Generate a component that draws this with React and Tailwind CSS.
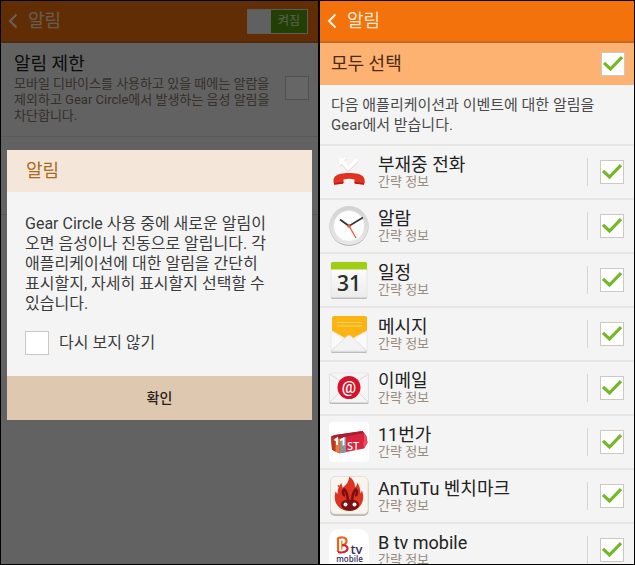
import React, { useState } from "react";

function MissedCallIcon() {
  return (
    <svg viewBox="0 0 40 40" className="size-10" aria-hidden="true">
      <path d="M10.500 15.500V7h7l-2.300 2.400 3.800 5.600 8-8 2.500 2.500L19 20.500l-6.300-7.700z" fill="#d9d9d9" />
      <path d="M10.200 14.500V6h7.300l-2.300 2.400 3.800 5.800 8-8 2.500 2.300L19 19.300l-6.300-7.500z" fill="#fff" />
      <path d="M4.600 30c-.8-4.500 2.200-7 7-8.200 5-1.100 12-1.100 17 0 4.800 1.200 7.700 3.700 7 8.200l-.7 2.500-8.400-1c-.7-.1-1-.6-1-1.300v-2.600c-3.500-1-7.500-1-11 0v2.600c0 .7-.3 1.200-1 1.300l-8.200 1z" fill="#e03322" />
      <path d="M4.600 29.500l.7 3.200 8.200-1c.7-.1 1-.6 1-1.300v-1l-1 .6-8 1zM35.600 29.500l-.7 3.200-8.400-1c-.7-.1-1-.6-1-1.300v-1l1 .6 8 1z" fill="#b81f14" />
    </svg>
  );
}

function ClockIcon() {
  return (
    <svg viewBox="0 0 40 40" className="size-10" aria-hidden="true">
      <defs>
        <linearGradient id="clock-rim" x1="0" y1="0" x2="0" y2="1">
          <stop offset="0" stopColor="#d2d2d2" />
          <stop offset="1" stopColor="#e8e8e8" />
        </linearGradient>
      </defs>
      <circle cx="20" cy="20.400" r="19.500" fill="#b3b3b3" />
      <circle cx="20" cy="19.600" r="19.500" fill="url(#clock-rim)" />
      <circle cx="20" cy="20" r="15.500" fill="#fdfdfd" stroke="#dedede" strokeWidth="0.600" />
      <path d="M11 13.500L20 20" stroke="#343434" strokeWidth="1.900" />
      <path d="M20 20L34 11.500" stroke="#343434" strokeWidth="1.500" />
      <path d="M19.500 19L27 32" stroke="#e8573c" strokeWidth="1.300" />
      <circle cx="20" cy="20" r="1.800" fill="#e8573c" />
    </svg>
  );
}

function CalendarIcon() {
  return (
    <svg viewBox="0 0 40 40" className="size-10" aria-hidden="true">
      <defs>
        <linearGradient id="cal-page" x1="0" y1="0" x2="0" y2="1">
          <stop offset="0" stopColor="#fff" />
          <stop offset="1" stopColor="#ececec" />
        </linearGradient>
      </defs>
      <rect x="2" y="2.500" width="36" height="36.500" rx="1.500" fill="#bcbcbc" />
      <rect x="2" y="2" width="36" height="35.500" rx="1.500" fill="url(#cal-page)" stroke="#dadada" strokeWidth="0.500" />
      <path d="M2 9.500V3.500a1.500 1.500 0 0 1 1.500-1.500h33a1.500 1.500 0 0 1 1.500 1.500v6z" fill="#a3cc14" />
      <text x="20" y="31" textAnchor="middle" fontFamily="Open Sans, sans-serif" fontWeight="600" fontSize="21" fill="#283127">31</text>
    </svg>
  );
}

function MessageIcon() {
  return (
    <svg viewBox="0 0 40 40" className="size-10" aria-hidden="true">
      <rect x="2" y="18" width="36" height="21" rx="1.500" fill="#bdbdbd" />
      <path d="M2 18h36v18a1.500 1.500 0 0 1-1.500 1.500h-33A1.500 1.500 0 0 1 2 36z" fill="#f7f7f7" />
      <path d="M3 4a2 2 0 0 1 2-2h31a2 2 0 0 1 2 2v12.500L24 24h-8L3 16.500z" fill="#fbb411" />
      <path d="M8 8.500h25M8 12h25" stroke="#fdd467" strokeWidth="1" />
      <path d="M2 17l14 8-14 12zM38 17l-14 8 14 12z" fill="#fafafa" stroke="#d8d8d8" strokeWidth="0.500" />
      <path d="M2 37.200L17.500 22.500q2.500-2.500 5 0L38 37.200z" fill="#f3f3f3" stroke="#d5d5d5" strokeWidth="0.600" />
    </svg>
  );
}

function EmailIcon() {
  return (
    <svg viewBox="0 0 40 40" className="size-10" aria-hidden="true">
      <rect x="0.500" y="6" width="39" height="30" rx="1.500" fill="#b9b9b9" />
      <rect x="0.500" y="5" width="39" height="29.500" rx="1.500" fill="#f5f5f5" stroke="#dcdcdc" strokeWidth="0.500" />
      <path d="M1 6l19 13.500L39 6M1 34l14-14M39 34L25 20" fill="none" stroke="#cbcbcb" strokeWidth="0.700" />
      <circle cx="20" cy="19.500" r="11.500" fill="#d5132b" />
      <text x="20" y="24.500" textAnchor="middle" fontFamily="Roboto, sans-serif" fontWeight="500" fontSize="16" fill="#fff">@</text>
    </svg>
  );
}

function ElevenStreetIcon() {
  return (
    <svg viewBox="0 0 40 40" className="size-10" aria-hidden="true">
      <rect width="40" height="40" rx="3.500" fill="#fff" />
      <path d="M2 14.500l4-1.500L33.500 9l3.500 4.500 1.500 7-3.500 6-18 3.500-7.500 1L3 27.500z" fill="#d92440" />
      <path d="M2 14.500l4-1.500L33.500 9l1.500 2-17.500 3.500-7.500 2.500z" fill="#aa1a30" />
      <path d="M2 14.500L6.500 16v14L3 27.500z" fill="#b8371f" />
      <path d="M6.500 16l4 .8V31.500l-4-1.700z" fill="#ee7d2c" />
      <path d="M10.500 16.800l6.500-1.800v15.200l-6.500 1.300z" fill="#8f9499" />
      <path d="M5.500 18.500l2.500-2v6.500M11 18.500l3.500-2v7" fill="none" stroke="#fff" strokeWidth="1.900" />
      <path d="M35 11l2.500 3 1 6.500-3.200 5.500-1.300-3.500 1-3.500z" fill="#f0485c" />
      <text x="24" y="27.500" textAnchor="middle" fontFamily="Noto Sans, sans-serif" fontWeight="500" fontSize="11" fill="#fff">ST</text>
    </svg>
  );
}

function AntutuIcon() {
  return (
    <svg viewBox="0 0 40 40" className="size-10" aria-hidden="true">
      <rect x="1" y="1.500" width="38.500" height="38.500" rx="5" fill="#bcb8b2" />
      <rect x="1.500" y="0.500" width="37.500" height="37.500" rx="4.500" fill="#f8f5ef" stroke="#dcd8d1" strokeWidth="0.700" />
      <path d="M20 .5c4.500 3 6 6.500 6 10.500 1.500-1 2.300-2.500 2.300-4.500 3.200 5 2.700 8 3.200 10.500.8-.8 1.300-1.800 1.300-2.800 3 7.300 1 13.800-3.600 17.800-5.200 4-13.200 4-18.200 0C6.300 28 4.500 23.500 6.500 15.500c.8 1.300 1.500 2 2.300 2.300-1-5 2.200-7.500 3.200-10.800 1 1.800 1.500 3.300 1.500 4.700C17.500 8.500 20.300 5 20 .5z" fill="#dc3322" />
      <path d="M8.500 9.500q2-1.200 2.500 1.200-1.500 2-2.500-1.200z" fill="#e3402b" />
      <path d="M19 26c-.5-4 .2-9-3.800-12.500-2 2-1.500 5.500.8 6" fill="none" stroke="#7a1011" strokeWidth="2.600" />
      <path d="M23 26c.5-4-.2-9 3.800-12.500 2 2 1.500 5.500-.8 6" fill="none" stroke="#7a1011" strokeWidth="2.600" />
      <path d="M12 28c.5-3.200 4-4.300 9-4.300s8.500 1.100 9 4.300c.5 4-4 6.800-9 6.800s-9.500-2.800-9-6.800z" fill="#7a1011" />
      <circle cx="16.500" cy="28.500" r="2" fill="#fff" />
      <circle cx="25.500" cy="28.500" r="2" fill="#fff" />
    </svg>
  );
}

function BtvIcon() {
  return (
    <svg viewBox="0 0 40 40" className="size-10 overflow-visible" aria-hidden="true">
      <rect y="-1" width="40" height="41" rx="10" fill="#fff" />
      <path d="M9 7.500v14.500M9 8c5.500-1.500 8.500 0 8.500 3s-2 3.800-4.500 4.300" fill="none" stroke="#e9641f" strokeWidth="2.200" />
      <path d="M12.800 10.500v9" stroke="#f39a2c" strokeWidth="1.600" />
      <path d="M13 15.300c4-.3 5.700 1.200 5.500 3.400-.4 3.500-5 4.300-9.500 3.500" fill="none" stroke="#d81f35" strokeWidth="2.200" />
      <text x="27.500" y="23.500" textAnchor="middle" fontFamily="Open Sans, sans-serif" fontWeight="600" fontSize="13" fill="#33305f">tv</text>
      <text x="20.500" y="32" textAnchor="middle" fontFamily="Open Sans, sans-serif" fontWeight="600" fontSize="8" fill="#33305f">mobile</text>
    </svg>
  );
}

const apps = [
  { id: "missed", name: "부재중 전화", Icon: MissedCallIcon },
  { id: "alarm", name: "알람", Icon: ClockIcon },
  { id: "calendar", name: "일정", Icon: CalendarIcon },
  { id: "message", name: "메시지", Icon: MessageIcon },
  { id: "email", name: "이메일", Icon: EmailIcon },
  { id: "eleven", name: "11번가", Icon: ElevenStreetIcon },
  { id: "antutu", name: "AnTuTu 벤치마크", Icon: AntutuIcon },
  { id: "btv", name: "B tv mobile", Icon: BtvIcon },
];

function CheckBox({ id, label, defaultChecked }) {
  return (
    <span className="grid size-6 shrink-0">
      <input
        id={id}
        type="checkbox"
        aria-label={label}
        defaultChecked={defaultChecked}
        className="peer col-start-1 row-start-1 size-6 appearance-none border border-[#cfc8c2] bg-white"
      />
      <svg
        viewBox="0 0 24 24"
        className="pointer-events-none invisible col-start-1 row-start-1 size-6 peer-checked:visible"
        aria-hidden="true"
      >
        <path d="M3 10.800l6.500 6.200L21 5.200" fill="none" stroke="#74b82a" strokeWidth="3.200" />
      </svg>
    </span>
  );
}

function Header({ children }) {
  return (
    <header className="flex h-[42px] shrink-0 items-center border-b-2 border-[#c56a22] bg-[#f3720c] pr-[10px] pl-[6px]">
      <button type="button" aria-label="뒤로" className="text-[#fff0e2]">
        <svg viewBox="0 0 12 16" className="h-4 w-3" aria-hidden="true">
          <path d="M9.500 1.500L3 8l6.500 6.500" fill="none" stroke="currentColor" strokeWidth="2" />
        </svg>
      </button>
      <h1 className="ml-[9px] flex-1 text-lg text-[#ffe6d0]">알림</h1>
      {children}
    </header>
  );
}

function NoticeScreen() {
  const [on, setOn] = useState(true);
  return (
    <section className="relative flex flex-[317_1_0%] flex-col overflow-hidden bg-[#f4f4f4]">
      <Header>
        <button
          type="button"
          role="switch"
          aria-checked={on}
          onClick={() => setOn(!on)}
          className="flex h-[25px] w-[61px] border border-[#e5e5e5] bg-[#59a00a] text-xs text-[#e0efcf]"
        >
          <span className="h-full w-[23px] bg-[#efefef]" />
          <span className="flex-1 self-center">켜짐</span>
        </button>
      </Header>
      <div className="flex items-center border-b border-[#dcdcdc] pt-[9px] pr-[9px] pb-3 pl-[13px]">
        <div className="flex-1">
          <h2 className="text-lg leading-6 text-[#222]">
            <label htmlFor="limit">알림 제한</label>
          </h2>
          <p className="text-[13px] leading-4 text-[#85786a]">
            모바일 디바이스를 사용하고 있을 때에는 알람을
            <br />
            제외하고 Gear Circle에서 발생하는 음성 알림을
            <br />
            차단합니다.
          </p>
        </div>
        <CheckBox id="limit" />
      </div>
      <div className="h-[78px] border-b border-[#dcdcdc]" />

      <div className="absolute inset-0 flex items-center bg-black/60 px-[6px] pt-1">
        <div role="dialog" aria-labelledby="dialog-title" className="w-full bg-[#f4f4f4]">
          <h2
            id="dialog-title"
            className="flex h-[42px] items-center bg-[#f4e7da] px-[19px] text-lg text-[#a66c1e]"
          >
            알림
          </h2>
          <div className="px-[18px] pt-[22px] pb-[21px] text-base leading-5 text-[#3c3c3c]">
            <p>
              Gear Circle 사용 중에 새로운 알림이
              <br />
              오면 음성이나 진동으로 알립니다. 각
              <br />
              애플리케이션에 대한 알림을 간단히
              <br />
              표시할지, 자세히 표시할지 선택할 수
              <br />
              있습니다.
            </p>
            <div className="mt-[17px] flex items-center gap-[10px]">
              <CheckBox id="hide-again" />
              <label htmlFor="hide-again">다시 보지 않기</label>
            </div>
          </div>
          <button type="button" className="h-11 w-full bg-[#dec8af] text-sm font-medium text-[#2c2118]">
            확인
          </button>
        </div>
      </div>
    </section>
  );
}

function AppRow({ app }) {
  const { id, name, Icon } = app;
  return (
    <li className="flex h-[54px] shrink-0 items-center border-t-2 border-[#e8e6e5] pr-[10px] pl-[9px]">
      <Icon />
      <label htmlFor={id} className="ml-[9px] flex-1">
        <span className="block text-lg leading-5 text-[#222]">{name}</span>
        <span className="block text-[13px] leading-[14px] text-[#998b7e]">간략 정보</span>
      </label>
      <span className="mr-3 h-7 w-px bg-[#d6d6d6]" />
      <CheckBox id={id} defaultChecked />
    </li>
  );
}

function ListScreen() {
  return (
    <section className="flex flex-[314_1_0%] flex-col overflow-hidden bg-[#f4f4f4]">
      <Header />
      <div className="flex h-[42px] shrink-0 items-center justify-between bg-[#fdb271] pr-[9px] pl-[11px]">
        <label htmlFor="all" className="text-lg text-[#4a2b12]">
          모두 선택
        </label>
        <CheckBox id="all" defaultChecked />
      </div>
      <p className="h-[59px] shrink-0 px-[11px] pt-[10px] text-[15px] leading-5 text-[#4a4a4a]">
        다음 애플리케이션과 이벤트에 대한 알림을
        <br />
        Gear에서 받습니다.
      </p>
      <ul>
        {apps.map((app) => (
          <AppRow key={app.id} app={app} />
        ))}
      </ul>
    </section>
  );
}

export default function App() {
  return (
    <main
      lang="ko"
      className="flex h-screen gap-[2px] overflow-hidden bg-black p-px font-[Roboto,'Noto_Sans_CJK_KR',sans-serif]"
    >
      <NoticeScreen />
      <ListScreen />
    </main>
  );
}
